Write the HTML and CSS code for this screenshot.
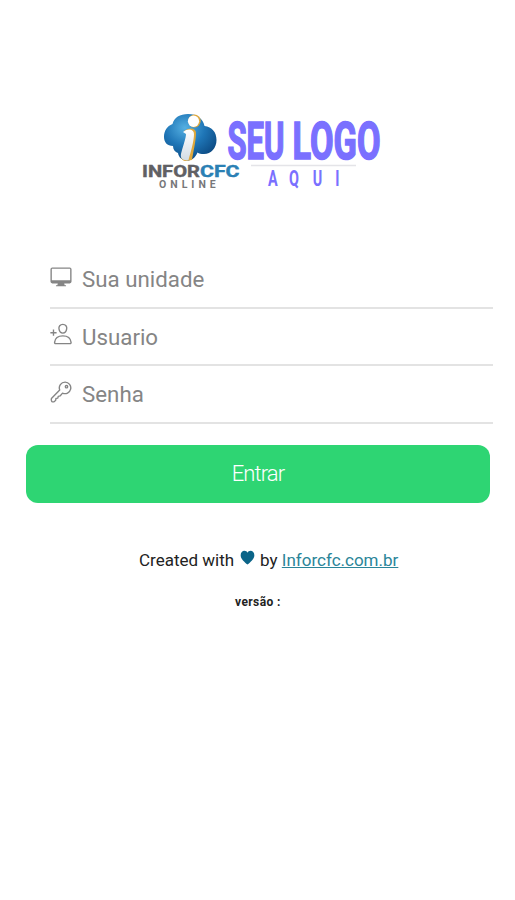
FILE: index.html
```html
<!DOCTYPE html>
<html lang="pt-BR">
<head>
    <meta charset="UTF-8">
    <meta name="viewport" content="width=device-width, initial-scale=1.0">
    <title>Inforcfc</title>
    <link rel="stylesheet" href="styles.css">
</head>
<body>
    <div class="content">
        <svg class="logo" viewBox="130 100 260 100" role="img" aria-label="Inforcfc Online">
            <defs>
                <radialGradient id="cloud" cx="0.4" cy="0.3" r="0.75">
                    <stop offset="0" stop-color="#55b0e2"/>
                    <stop offset="0.5" stop-color="#1f76b7"/>
                    <stop offset="1" stop-color="#0b477f"/>
                </radialGradient>
                <linearGradient id="stem" x1="0" y1="0" x2="0" y2="1">
                    <stop offset="0" stop-color="#ffffff"/>
                    <stop offset="1" stop-color="#d3dde6"/>
                </linearGradient>
            </defs>
            <path fill="url(#cloud)" d="M173 146C167 146 164 142 164 137C164 131 167 126 172.500 124C174 117.500 180 114 188 114C197 114 203 118.500 204.500 126C212 127 216.500 132 216.500 140C216.500 148 211 154 204 154C201 154 199 153.500 197.500 152.500C195 158 192 160.500 187 160.500C182 160.500 178.500 157 178 153C175 152 173 149.500 173 146Z"/>
            <path class="logo-edge" d="M184 131C190 127 196 128 196 133C196 141 193 153 192 160L185 161C180 160 181 155 182 152C184 145 187 137 187 134Z"/>
            <path fill="url(#stem)" d="M183 132C188 128 194 129 194 134C194 141 191 151 188.500 160C183 161 180 158 181 154C183 146 186 138 186 134C185 133 184 133 183 132Z"/>
            <ellipse class="logo-edge" cx="194.500" cy="121" rx="6.200" ry="6.500"/>
            <ellipse fill="#ffffff" cx="193.500" cy="121.200" rx="5.600" ry="5.800"/>
            <text class="logo-infor" x="142" y="177" textLength="58" lengthAdjust="spacingAndGlyphs">INFOR</text>
            <text class="logo-cfc" x="200" y="177" textLength="39.500" lengthAdjust="spacingAndGlyphs">CFC</text>
            <text class="logo-online" x="159" y="188">ONLINE</text>
            <text class="logo-seu" x="227.500" y="158.500" textLength="57" lengthAdjust="spacingAndGlyphs">SEU</text>
            <text class="logo-seu" x="292.500" y="158.500" textLength="88" lengthAdjust="spacingAndGlyphs">LOGO</text>
            <path class="logo-rule" d="M251 165.500H356"/>
            <text class="logo-aqui" transform="translate(268 186) scale(0.640 1)" x="0 33 70 105" y="0">AQUI</text>
        </svg>

        <form class="login">
            <div class="fields">
                <label class="field">
                    <svg class="field-icon" viewBox="0 0 24 24">
                        <path fill="#858585" stroke="none" d="M2.500 1.500H21.500Q23.500 1.500 23.500 3.500V17Q23.500 19 21.500 19H15.500L16 21H17.500V22H6.500V21H8L8.500 19H2.500Q.5 19 .5 17V3.500Q.5 1.500 2.500 1.500ZM2 3V15.500H22V3Z"/>
                    </svg>
                    <input type="text" placeholder="Sua unidade">
                </label>
                <label class="field">
                    <svg class="field-icon" viewBox="0 0 24 24">
                        <path d="M14 1.500C17 1.500 18.700 3.800 18.200 6.500C17.800 9.200 16 11 14 11S10.200 9.200 9.800 6.500C9.300 3.800 11 1.500 14 1.500ZM14 14C19.500 14 22.500 16.500 23 21.200Q23.100 22.500 21.800 22.500H6.200Q4.900 22.500 5 21.200C5.500 16.500 8.500 14 14 14ZM3.800 7.200V14M.4 10.600H7.200"/>
                    </svg>
                    <input type="text" placeholder="Usuario">
                </label>
                <label class="field">
                    <svg class="field-icon" viewBox="0 0 24 24">
                        <path d="M16.500 1.200A6.300 6.300 0 0 0 10.600 9.800L1.800 18.800Q1.200 19.500 1.500 21L2 22.500Q3.500 23 4.700 22.500L6.200 21L6.500 19L8.500 18.600L9 16.700L11 16.300L13.700 13.200A6.300 6.300 0 1 0 16.500 1.200Z"/>
                        <circle cx="18" cy="6.200" r="1.300"/>
                    </svg>
                    <input type="password" placeholder="Senha">
                </label>
            </div>
            <button class="login-button" type="button">Entrar</button>
        </form>

        <p class="credits">
            Created with
            <svg class="heart" viewBox="0 0 16 16"><path d="M8 15.500C5 13 .7 9.500 .7 5.500C.7 2.500 2.600 .8 4.700 .8C6.200 .8 7.300 1.600 8 2.800C8.700 1.600 9.800 .8 11.300 .8C13.400 .8 15.300 2.500 15.300 5.500C15.300 9.500 11 13 8 15.500Z"/></svg>
            by <a href="#">Inforcfc.com.br</a>
        </p>
        <p class="version">versão :</p>
    </div>
</body>
</html>
```
FILE: styles.css
```css
* {
    margin: 0;
    padding: 0;
    box-sizing: border-box;
}

body {
    font-family: Roboto, sans-serif;
    background-color: #fff;
    color: #222;
}

.content {
    min-height: 100vh;
    padding: 100px 22px 0 26px;
}

.logo {
    display: block;
    width: 260px;
    height: 100px;
    margin-left: 104px;
    overflow: visible;
}

.logo text {
    font-weight: 700;
}

.logo-edge {
    fill: #dfa83c;
}

.logo-infor {
    font-size: 16px;
    fill: #606064;
    stroke: #606064;
    stroke-width: 0.4;
}

.logo-cfc {
    font-size: 16px;
    fill: #2a80b4;
    stroke: #2a80b4;
    stroke-width: 0.4;
}

.logo-online {
    font-size: 10.5px;
    letter-spacing: 4px;
    fill: #77777a;
}

.logo-seu {
    font-size: 51px;
    fill: #7a70ff;
    stroke: #7a70ff;
    stroke-width: 1.6;
}

.logo-aqui {
    font-size: 22.5px;
    fill: #7a70ff;
}

.logo-rule {
    stroke: #e4e4e8;
    stroke-width: 1.5;
}

.fields {
    padding: 51px 0 0 24px;
}

.field {
    display: flex;
    align-items: center;
    height: 57.5px;
    border-bottom: 2px solid #e3e3e3;
}

.field-icon {
    flex: none;
    width: 22px;
    height: 22px;
    margin: 0 10px 4px 0;
    fill: none;
    stroke: #858585;
    stroke-width: 1.5;
    stroke-linejoin: round;
}

.field input {
    flex: 1;
    min-width: 0;
    padding-top: 1px;
    border: none;
    outline: none;
    background: none;
    font-family: inherit;
    font-size: 22.3px;
    color: #222;
}

.field input::placeholder {
    color: #858585;
}

.login-button {
    display: block;
    width: 464px;
    height: 58px;
    margin-top: 21px;
    border: none;
    border-radius: 12px;
    background-color: #2ed573;
    color: #fff;
    font-family: inherit;
    font-size: 22px;
    font-weight: 300;
    letter-spacing: -0.9px;
}

.credits {
    margin: 47px 0 0 113px;
    font-size: 17px;
    line-height: 20px;
    white-space: nowrap;
}

.credits a {
    color: #2b8599;
}

.heart {
    width: 15px;
    height: 15px;
    margin: 0 1px 1px 1.5px;
    fill: #0b6488;
}

.version {
    margin: 25px 0 0 209px;
    font-size: 12px;
    font-weight: 700;
    letter-spacing: 0.4px;
    line-height: 14px;
}
```
